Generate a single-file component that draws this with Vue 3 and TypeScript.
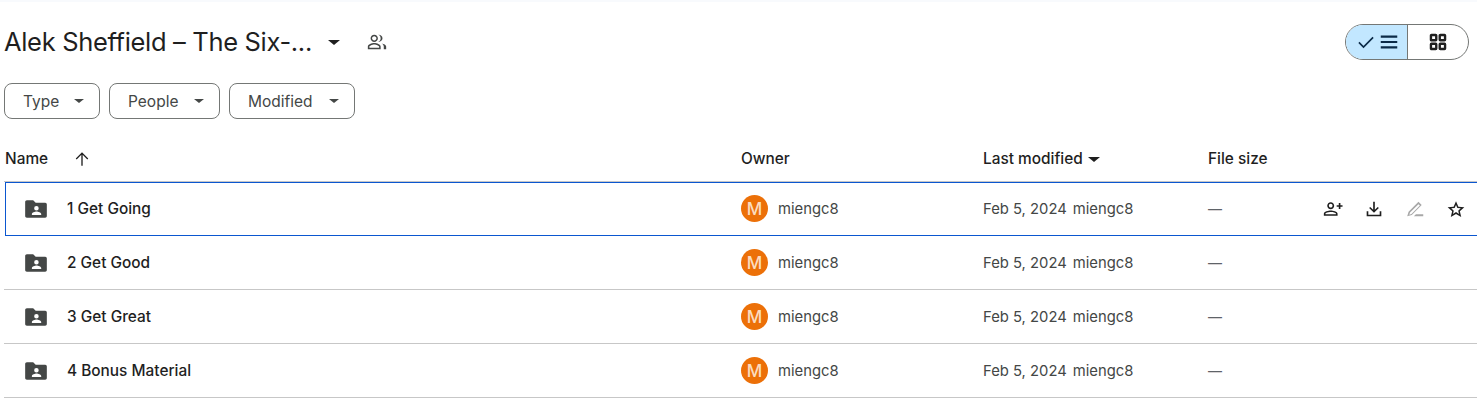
<script setup lang="ts">
const rows = [
  { name: '1 Get Going', selected: true },
  { name: '2 Get Good', selected: false },
  { name: '3 Get Great', selected: false },
  { name: '4 Bonus Material', selected: false },
]
const filters = ['Type', 'People', 'Modified']
</script>

<template>
  <main class="page">
    <header class="title-row">
      <h1 class="title">Alek Sheffield – The Six-...</h1>
      <span class="caret caret-title"></span>
      <svg class="people" viewBox="0 0 24 24" width="22" height="22" fill="#444746">
        <path d="M9 13c-2.700 0-7 1.300-7 4v3h14v-3c0-2.700-4.300-4-7-4zm5.300 5.400H3.700V17c0-.9 3.100-2.400 5.300-2.400s5.300 1.500 5.300 2.400v1.400zM9 12c2.200 0 4-1.800 4-4s-1.800-4-4-4-4 1.800-4 4 1.800 4 4 4zm0-6.400c1.300 0 2.400 1.100 2.400 2.400S10.300 10.400 9 10.400 6.600 9.300 6.600 8 7.700 5.600 9 5.600zM13.500 4.100C15 4.600 16 6.200 16 8s-1 3.400-2.500 3.900c1.900.3 4.500-1.300 4.500-3.900s-2.600-4.200-4.500-3.900zM17 13.500c1.400.8 2.400 2 2.400 3.500v3H22v-3c0-1.900-2.500-3.100-5-3.500z"/>
      </svg>
      <div class="toggle">
        <div class="toggle-on">
          <svg viewBox="0 0 24 24" width="20" height="20" fill="none" stroke="#0b2a47" stroke-width="2"><path d="M3.500 12.500l5.500 5.500L20.500 6.500"/></svg>
          <svg viewBox="0 0 24 24" width="22" height="22" fill="#0b2a47"><path d="M3 5h18v2.400H3zM3 10.800h18v2.400H3zM3 16.600h18V19H3z"/></svg>
        </div>
        <div class="toggle-off">
          <svg viewBox="0 0 24 24" width="22" height="22" fill="none" stroke="#1f1f1f" stroke-width="2.600">
            <rect x="4.300" y="4.300" width="5.800" height="5.800" rx=".6"/>
            <rect x="13.900" y="4.300" width="5.800" height="5.800" rx=".6"/>
            <rect x="4.300" y="13.900" width="5.800" height="5.800" rx=".6"/>
            <rect x="13.900" y="13.900" width="5.800" height="5.800" rx=".6"/>
          </svg>
        </div>
      </div>
    </header>

    <div class="filters">
      <button v-for="f in filters" :key="f" class="chip">
        <span>{{ f }}</span>
        <span class="caret caret-small"></span>
      </button>
    </div>

    <div class="grid head">
      <div class="name-head">
        <span>Name</span>
        <svg viewBox="0 0 24 24" width="20" height="20" fill="#1f1f1f"><path d="M11.200 20V7l-5.600 5.600L4.500 11.400 12 4l7.500 7.400-1.100 1.200L12.800 7v13z"/></svg>
      </div>
      <div>Owner</div>
      <div class="mod-head"><span>Last modified</span><span class="caret caret-head"></span></div>
      <div>File size</div>
      <div></div>
    </div>

    <div v-for="r in rows" :key="r.name" class="grid row" :class="{ selected: r.selected }">
      <div class="name-cell">
        <svg class="folder" viewBox="0 0 24 24" width="26" height="26" fill="#444746">
          <path fill-rule="evenodd" d="M2 5.600C2 4.700 2.700 4 3.600 4h5.800l2.300 2.300h8.800c.9 0 1.500.7 1.500 1.600v10.500c0 .9-.7 1.600-1.500 1.600H3.600c-.9 0-1.600-.7-1.600-1.600V5.600zM14.500 11.300a2.100 2.100 0 1 1-4.200 0 2.100 2.100 0 0 1 4.200 0zM8.200 16.700c0-1.500 2.900-2.400 4.300-2.400s4.300.9 4.300 2.400v.9H8.200v-.9z"/>
        </svg>
        <span class="fname">{{ r.name }}</span>
      </div>
      <div class="owner-cell">
        <span class="avatar">M</span>
        <span class="muted">miengc8</span>
      </div>
      <div class="mod-cell muted"><span>Feb 5, 2024</span><span>miengc8</span></div>
      <div class="size-cell">—</div>
      <div class="actions">
        <template v-if="r.selected">
          <svg viewBox="0 0 24 24" width="22" height="22" fill="#1f1f1f">
            <path d="M9.500 12.200c-2.100 0-3.800-1.700-3.800-3.800S7.400 4.600 9.500 4.600s3.800 1.700 3.800 3.800-1.700 3.800-3.800 3.800zm0-1.800c1.100 0 2-.9 2-2s-.9-2-2-2-2 .9-2 2 .9 2 2 2zM2 19.400v-2.300c0-2.400 5-3.600 7.500-3.600s7.500 1.200 7.500 3.600v2.300H2zm1.800-1.800h11.400v-.5c0-.9-3.400-1.800-5.700-1.800s-5.700.9-5.700 1.800v.5zM18.300 12V9.600H16V7.800h2.300V5.500h1.800v2.300h2.300v1.800h-2.300V12h-1.800z"/>
          </svg>
          <svg viewBox="0 0 24 24" width="22" height="22" fill="#1f1f1f">
            <path d="M11.100 4h1.800v8.900l3.200-3.200 1.200 1.300-5.300 5.200L6.700 11l1.200-1.300 3.200 3.200V4zM4 14.500h1.800v3.700h12.400v-3.700H20V20H4v-5.500z"/>
          </svg>
          <svg viewBox="0 0 24 24" width="22" height="22" fill="#a8a8a8">
            <path d="M15.800 4.200l3.500 3.500L8.500 18.500 3.500 20l1.500-5L15.800 4.200zm0 2.500L6.600 15.900l-.8 2.300 2.300-.8L17.300 8.200l-1.500-1.500zM13 17.700h8V20h-10.300z"/>
          </svg>
          <svg viewBox="0 0 24 24" width="22" height="22" fill="#1f1f1f">
            <path d="M12 3.500l2.600 6 6.500.6-4.900 4.300 1.500 6.400L12 17.400l-5.700 3.400 1.500-6.400-4.900-4.300 6.500-.6 2.600-6zm0 4.200L10.500 11l-3.700.3 2.800 2.500-.9 3.600 3.300-2 3.300 2-.9-3.600 2.800-2.500-3.700-.3L12 7.700z"/>
          </svg>
        </template>
      </div>
    </div>
  </main>
</template>

<style>
html, body { margin: 0; background: #fff; }
</style>

<style scoped>
.page {
  width: 1477px;
  height: 408px;
  overflow: hidden;
  box-sizing: border-box;
  border-top: 2px solid #f8fafd;
  background: #fff;
  font-family: Inter, Roboto, sans-serif;
  color: #1f1f1f;
  font-size: 14.800px;
}
.title-row {
  display: flex;
  align-items: center;
  height: 80px;
  padding: 0 8px 0 4px;
  box-sizing: border-box;
}
.title {
  margin: 0;
  font-size: 25.500px;
  font-weight: 400;
  line-height: 36px;
  white-space: nowrap;
  width: 308px;
  letter-spacing: -0.33px;
}
.caret {
  display: inline-block;
  width: 0;
  height: 0;
  border-style: solid;
  border-color: #1f1f1f transparent transparent;
}
.caret-title { border-width: 5px 6px 0; margin-left: 16px; }
.people { margin-left: 26px; }
.toggle {
  margin-left: auto;
  display: flex;
  width: 124px;
  height: 36px;
  box-sizing: border-box;
  border: 1px solid #747775;
  border-radius: 18px;
  overflow: hidden;
}
.toggle-on {
  width: 62px;
  display: flex;
  align-items: center;
  justify-content: center;
  gap: 2px;
  padding-left: 3px;
  box-sizing: border-box;
  background: #c2e7ff;
  border-right: 1px solid #747775;
}
.toggle-off {
  flex: 1;
  display: flex;
  align-items: center;
  justify-content: center;
}
.filters {
  display: flex;
  gap: 9px;
  padding: 1px 0 0 4px;
}
.chip {
  display: flex;
  align-items: center;
  justify-content: space-between;
  height: 36px;
  padding: 0 15px 0 18px;
  box-sizing: border-box;
  border: 1px solid #747775;
  border-radius: 8px;
  background: #fff;
  color: #444746;
  font-family: inherit;
  font-size: 15.500px;
}
.chip:nth-child(1) { width: 96px; }
.chip:nth-child(2) { width: 111px; }
.chip:nth-child(3) { width: 126px; }
.caret-small { border-width: 4px 5px 0; border-top-color: #444746; }
.grid {
  display: grid;
  grid-template-columns: 736px 242px 225px 1fr 180px;
  margin-left: 5px;
  align-items: center;
}
.head {
  height: 63px;
  box-sizing: border-box;
  padding-top: 17px;
  margin-left: 4px;
  padding-left: 1px;
  border-bottom: 1px solid #c7c7c7;
  font-size: 15.400px;
  font-weight: 500;
}
.name-head { display: flex; align-items: center; gap: 24px; }
.mod-head { display: flex; align-items: center; gap: 5px; }
.caret-head { border-width: 5px 6px 0; margin-top: 1px; }
.row {
  height: 54px;
  box-sizing: border-box;
  border-bottom: 1px solid #c7c7c7;
  margin-left: 4px;
  padding-left: 1px;
}
.row.selected {
  margin-left: 5px;
  padding-left: 0;
  border-bottom: 0;
  padding-bottom: 1px;
  box-shadow: inset 1px 0 #0b57d0, inset 0 1px #0b57d0, inset 0 -1px #0b57d0;
}
.name-cell { display: flex; align-items: center; padding-left: 18px; gap: 18px; }
.fname { font-size: 15.400px; font-weight: 500; }
.owner-cell { display: flex; align-items: center; gap: 10px; }
.avatar {
  width: 27px;
  height: 27px;
  border-radius: 50%;
  background: #ec7008;
  color: #fbdcc0;
  font-size: 17px;
  font-weight: 500;
  display: flex;
  align-items: center;
  justify-content: center;
}
.muted { color: #444746; }
.mod-cell { display: flex; gap: 6px; }
.size-cell { color: #5f6368; font-size: 14px; }
.actions {
  display: flex;
  justify-content: flex-end;
  gap: 19px;
  padding-right: 10px;
}
</style>
